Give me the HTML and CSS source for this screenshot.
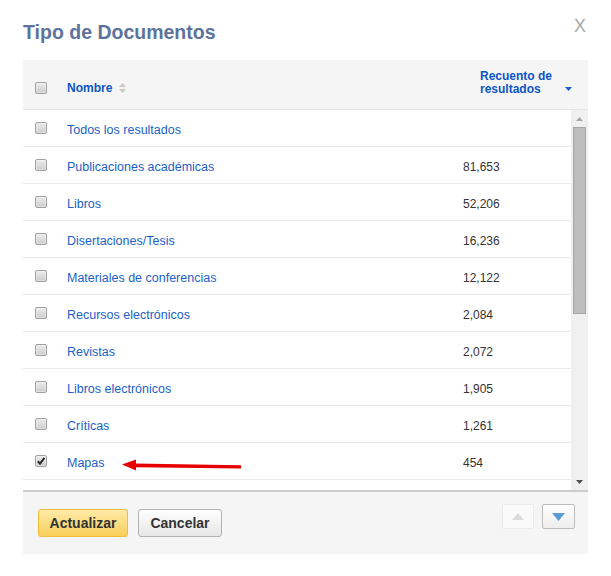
FILE: index.html
```html
<!DOCTYPE html>
<html lang="es">
<head>
<meta charset="utf-8">
<title>Tipo de Documentos</title>
<link rel="stylesheet" href="styles.css">
</head>
<body>
<div class="dialog">
  <div class="title-row">
    <h1 class="title">Tipo de Documentos</h1>
    <span class="close">X</span>
  </div>

  <div class="table-head">
    <div class="col-check"><span class="cb"></span></div>
    <div class="head-name">
      <span class="head-link">Nombre</span>
      <svg class="sort-icon" width="7" height="10" viewBox="0 0 7 10"><path d="M3.5 0 L7 4 L0 4 Z M0 6 L7 6 L3.5 10 Z" fill="#c9c9c9"/></svg>
    </div>
    <div class="head-count"><span class="head-link">Recuento de<br>resultados</span></div>
    <svg class="count-sort" width="7" height="4" viewBox="0 0 7 4"><path d="M0 0 L7 0 L3.5 4 Z" fill="#1a5dc9"/></svg>
  </div>

  <div class="list">
    <div class="rows">
      <div class="row"><div class="col-check"><span class="cb"></span></div><div class="name">Todos los resultados</div><div class="count"></div></div>
      <div class="row"><div class="col-check"><span class="cb"></span></div><div class="name">Publicaciones académicas</div><div class="count">81,653</div></div>
      <div class="row"><div class="col-check"><span class="cb"></span></div><div class="name">Libros</div><div class="count">52,206</div></div>
      <div class="row"><div class="col-check"><span class="cb"></span></div><div class="name">Disertaciones/Tesis</div><div class="count">16,236</div></div>
      <div class="row"><div class="col-check"><span class="cb"></span></div><div class="name">Materiales de conferencias</div><div class="count">12,122</div></div>
      <div class="row"><div class="col-check"><span class="cb"></span></div><div class="name">Recursos electrónicos</div><div class="count">2,084</div></div>
      <div class="row"><div class="col-check"><span class="cb"></span></div><div class="name">Revistas</div><div class="count">2,072</div></div>
      <div class="row"><div class="col-check"><span class="cb"></span></div><div class="name">Libros electrónicos</div><div class="count">1,905</div></div>
      <div class="row"><div class="col-check"><span class="cb"></span></div><div class="name">Críticas</div><div class="count">1,261</div></div>
      <div class="row"><div class="col-check"><span class="cb cb-checked"><svg width="10" height="10" viewBox="0 0 10 10"><path d="M1.8 5.2 L4 7.6 L8.4 1.8" fill="none" stroke="#2b2b2b" stroke-width="2"/></svg></span></div><div class="name">Mapas</div><div class="count">454</div></div>
    </div>
    <div class="scrollbar">
      <div class="sb-btn"><svg width="7" height="4" viewBox="0 0 7 4"><path d="M3.5 0 L7 4 L0 4 Z" fill="#a6a6a6"/></svg></div>
      <div class="sb-thumb"></div>
      <div class="sb-space"></div>
      <div class="sb-btn"><svg width="7" height="4" viewBox="0 0 7 4"><path d="M0 0 L7 0 L3.5 4 Z" fill="#505050"/></svg></div>
    </div>
  </div>

  <div class="footer">
    <div class="actions">
      <button class="btn btn-primary">Actualizar</button>
      <button class="btn btn-default">Cancelar</button>
    </div>
    <div class="pager">
      <span class="pg pg-disabled"><svg width="12" height="7" viewBox="0 0 12 7"><path d="M6 0 L12 7 L0 7 Z" fill="#dcdcdc"/></svg></span>
      <span class="pg pg-active"><svg width="13" height="8" viewBox="0 0 13 8"><path d="M0 0 L13 0 L6.5 8 Z" fill="#5b9bd6"/></svg></span>
    </div>
  </div>

  <svg class="red-arrow" width="135" height="20" viewBox="0 0 135 20">
    <path d="M20 9.6 L126 11.2 L126 14.6 L20 13.2 Z" fill="#e60000"/>
    <path d="M7 10.5 L21 5.5 L21 16.5 Z" fill="#e60000"/>
  </svg>
</div>
</body>
</html>
```

FILE: styles.css
```css
html, body {
  margin: 0;
  padding: 0;
  background: #ffffff;
}

body {
  font-family: "Liberation Sans", Arial, sans-serif;
  color: #333333;
}

.dialog {
  position: relative;
  width: 611px;
  height: 576px;
  box-sizing: border-box;
  padding: 0 23px;
}

.title-row {
  display: flex;
  justify-content: space-between;
  align-items: flex-start;
  height: 60px;
}

.title {
  margin: 20px 0 0;
  font-size: 19.5px;
  line-height: 24px;
  font-weight: bold;
  color: #5d739b;
}

.close {
  margin: 14px 2px 0 0;
  font-size: 18px;
  line-height: 24px;
  color: #a8a8a8;
}

/* header */
.table-head {
  display: flex;
  align-items: center;
  box-sizing: content-box;
  padding: 7px 16px 0 0;
  height: 42px;
  background: #f5f5f5;
  border-bottom: 1px solid #e6e6e6;
}

.col-check {
  width: 44px;
  flex: none;
  display: flex;
  align-items: center;
}

.cb {
  width: 12px;
  height: 12px;
  box-sizing: border-box;
  margin-left: 12px;
  border: 1px solid #9f9f9f;
  border-radius: 2px;
  background: linear-gradient(#ececec, #cdcdcd);
  box-shadow: inset 0 0 0 1px rgba(255, 255, 255, 0.35);
  display: flex;
  align-items: center;
  justify-content: center;
}

.cb svg {
  display: block;
}

.head-link {
  font-size: 12px;
  font-weight: bold;
  color: #0b56c6;
}

.head-name {
  flex: 1;
  display: flex;
  align-items: center;
  line-height: 15px;
}

.sort-icon {
  margin-left: 7px;
  display: block;
}

.head-count {
  width: 85px;
  line-height: 12px;
  margin-bottom: 13px;
}

.count-sort {
  display: block;
  margin-top: 2px;
}

/* list */
.list {
  display: flex;
  height: 380px;
  border-bottom: 2px solid #cccccc;
}

.rows {
  flex: 1;
  overflow: hidden;
}

.row {
  display: flex;
  align-items: center;
  height: 36px;
  border-bottom: 1px solid #ebebeb;
}

.name {
  width: 396px;
  padding-top: 4px;
  font-size: 12.5px;
  line-height: 15px;
  color: #1b5fc6;
}

.count {
  flex: 1;
  padding-top: 4px;
  font-size: 12px;
  line-height: 15px;
  color: #333333;
}

.scrollbar {
  width: 17px;
  flex: none;
  background: #f0f0f0;
  display: flex;
  flex-direction: column;
  align-items: center;
}

.sb-btn {
  height: 17px;
  display: flex;
  align-items: center;
  justify-content: center;
}

.sb-btn svg {
  display: block;
}

.sb-thumb {
  width: 13px;
  height: 187px;
  box-sizing: border-box;
  background: #bdbdbd;
  border: 1px solid #a6a6a6;
}

.sb-space {
  flex: 1;
}

/* footer */
.footer {
  display: flex;
  justify-content: space-between;
  align-items: flex-start;
  height: 50px;
  padding: 12px 13px 0 15px;
  background: #f5f5f5;
}

.actions {
  display: flex;
  gap: 10px;
  margin-top: 5px;
}

.btn {
  height: 28px;
  padding: 0 10px;
  border-radius: 3px;
  font-family: "Liberation Sans", Arial, sans-serif;
  font-size: 14px;
  font-weight: bold;
  color: #333333;
  cursor: pointer;
}

.btn-primary {
  width: 90px;
  border: 1px solid #efbf3c;
  background: linear-gradient(#feeaa9, #f8cf59);
}

.btn-default {
  width: 84px;
  border: 1px solid #b3b3b3;
  background: linear-gradient(#ffffff, #e6e6e6);
}

.pager {
  display: flex;
  gap: 8px;
}

.pg {
  width: 32px;
  height: 25px;
  box-sizing: border-box;
  border-radius: 2px;
  display: flex;
  align-items: center;
  justify-content: center;
}

.pg svg {
  display: block;
}

.pg-disabled {
  border: 1px solid #ebebeb;
  background: #fafafa;
}

.pg-active {
  width: 33px;
  border: 1px solid #bdbdbd;
  background: linear-gradient(#ffffff, #eeeeee);
}

.red-arrow {
  position: absolute;
  left: 115px;
  top: 454px;
  display: block;
}
```
